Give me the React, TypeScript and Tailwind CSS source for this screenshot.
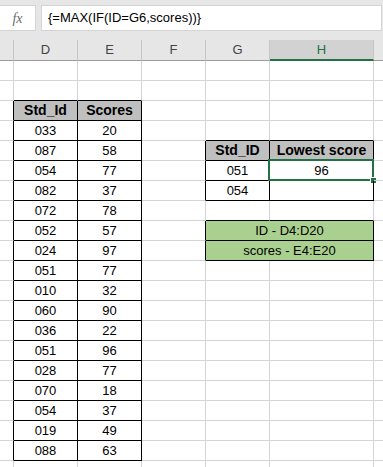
import { Fragment } from "react";

const ids = ["033", "087", "054", "082", "072", "052", "024", "051", "010", "060", "036", "051", "028", "070", "054", "019", "088"];
const scores = ["20", "58", "77", "37", "78", "57", "97", "77", "32", "90", "22", "96", "77", "18", "37", "49", "63"];
const letters = ["", "D", "E", "F", "G", "H", ""];

// which cells have a black border (the two little tables)
function inTable(r: number, c: number) {
  if ((c === 1 || c === 2) && r >= 3 && r <= 20) return true;
  if ((c === 4 || c === 5) && ((r >= 5 && r <= 7) || r === 9 || r === 10)) return true;
  return false;
}

function cellText(r: number, c: number): string {
  if (r === 3 && c === 1) return "Std_Id";
  if (r === 3 && c === 2) return "Scores";
  if (r >= 4 && r <= 20 && c === 1) return ids[r - 4];
  if (r >= 4 && r <= 20 && c === 2) return scores[r - 4];
  if (r === 5 && c === 4) return "Std_ID";
  if (r === 5 && c === 5) return "Lowest score";
  if (r === 6 && c === 4) return "051";
  if (r === 6 && c === 5) return "96";
  if (r === 7 && c === 4) return "054";
  if (r === 9 && c === 4) return "ID - D4:D20";
  if (r === 10 && c === 4) return "scores - E4:E20";
  return "";
}

function Cell({ r, c }: { r: number; c: number }) {
  const merged = (r === 9 || r === 10) && c === 4;
  const lastCol = merged ? 5 : c;
  const blackR = inTable(r, lastCol) || inTable(r, lastCol + 1);
  const blackB = inTable(r, c) || inTable(r + 1, c);
  const head = (r === 3 && (c === 1 || c === 2)) || (r === 5 && (c === 4 || c === 5));
  const green = merged;
  const selected = r === 6 && c === 5;
  return (
    <div
      className={[
        "relative h-[20px] flex items-end justify-center leading-[15px] pb-[2px] whitespace-nowrap",
        merged ? "col-span-2" : "",
        c === 6 ? "" : "border-r",
        blackR ? "border-r-black" : "border-r-[#d4d4d4]",
        "border-b",
        blackB ? "border-b-black" : "border-b-[#d4d4d4]",
        head ? "bg-[#bfbfbf] font-bold text-[14px]" : "text-[13px]",
        green ? "bg-[#a9d08e]" : "",
      ].join(" ")}
    >
      {cellText(r, c)}
      {selected && (
        <div className="absolute left-[-2px] top-[-2px] right-[-1px] bottom-[-1px] border-2 border-[#217346]">
          <div className="absolute right-[-5px] bottom-[-5px] w-[7px] h-[7px] bg-[#217346] border border-white" />
        </div>
      )}
    </div>
  );
}

export default function App() {
  const rows = Array.from({ length: 21 }, (_, i) => i + 1);
  return (
    <div className="w-[383px] h-[467px] overflow-hidden bg-white text-black" style={{ fontFamily: '"Liberation Sans", Arial, sans-serif' }}>
      <div className="h-[40px] bg-[#e6e6e6] pt-[5px] flex">
        <div className="w-[36px] h-[26px] bg-white border border-l-0 border-[#d4d4d4] flex items-center justify-center">
          <span className="italic text-[14px] text-[#6a6a6a]" style={{ fontFamily: '"Liberation Serif", serif' }}>fx</span>
        </div>
        <div className="ml-[5px] w-[341px] h-[26px] bg-white border border-[#d4d4d4] pl-[6px] pt-[4px] text-[13px] leading-[15px]">
          {"{=MAX(IF(ID=G6,scores))}"}
        </div>
      </div>
      <div className="grid grid-cols-[14px_64px_64px_64px_64px_104px_1fr]">
        {letters.map((l, c) => (
          <div
            key={c}
            className={[
              "h-[21px] flex items-center justify-center text-[13px]",
              c === 6 ? "" : "border-r border-r-[#c6c6c6]",
              c === 5 ? "bg-[#d2d2d2] text-[#217346] border-b-2 border-b-[#217346]" : "bg-[#e6e6e6] text-[#444] border-b border-b-[#9b9b9b]",
            ].join(" ")}
          >
            {l}
          </div>
        ))}
        {rows.map((r) => (
          <Fragment key={r}>
            {[0, 1, 2, 3, 4, 5, 6].map((c) => {
              if ((r === 9 || r === 10) && c === 5) return null;
              return <Cell key={c} r={r} c={c} />;
            })}
          </Fragment>
        ))}
      </div>
    </div>
  );
}
